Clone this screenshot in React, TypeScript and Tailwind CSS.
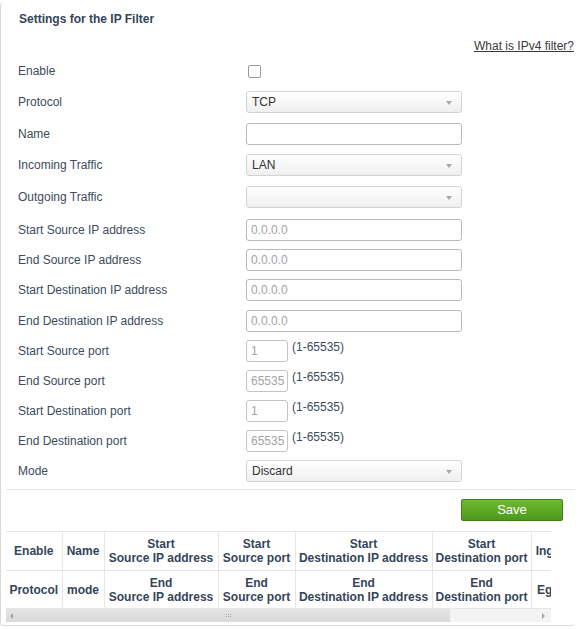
import React from "react";

const SelectBox = ({ value }: { value: string }) => (
  <div className="relative flex h-[22px] w-[216px] items-center rounded-[3px] border border-[#d3d3d3] bg-gradient-to-b from-white to-[#efefef] pl-[5px] text-[#333]">
    <span>{value}</span>
    <span className="absolute right-[9px] top-[9px] h-0 w-0 border-x-[3.5px] border-t-[4px] border-x-transparent border-t-[#a8a8a8]" />
  </div>
);

const TextBox = ({ placeholder }: { placeholder?: string }) => (
  <div className="flex h-[22px] w-[216px] items-center rounded-[3px] border border-[#b9b9b9] bg-white pl-[4px] text-[#a3a3a3]">
    {placeholder}
  </div>
);

const PortBox = ({ value }: { value: string }) => (
  <div className="flex items-start gap-[4px]">
    <div className="flex h-[22px] w-[42px] items-center overflow-hidden rounded-[3px] border border-[#c4c4c4] bg-white pl-[4px] text-[#a3a3a3]">
      {value}
    </div>
    <span className="leading-[14px] text-[#3b4b5b]">(1-65535)</span>
  </div>
);

type Row = { label: string; h: string; control: React.ReactNode };

const rows: Row[] = [
  {
    label: "Enable",
    h: "h-[30px]",
    control: <div className="ml-[2px] h-[13px] w-[13px] rounded-[2px] border border-[#9a9a9a] bg-white" />,
  },
  { label: "Protocol", h: "h-[32px]", control: <SelectBox value="TCP" /> },
  { label: "Name", h: "h-[32px]", control: <TextBox /> },
  { label: "Incoming Traffic", h: "h-[30px]", control: <SelectBox value="LAN" /> },
  { label: "Outgoing Traffic", h: "h-[34px]", control: <SelectBox value="" /> },
  { label: "Start Source IP address", h: "h-[31px]", control: <TextBox placeholder="0.0.0.0" /> },
  { label: "End Source IP address", h: "h-[30px]", control: <TextBox placeholder="0.0.0.0" /> },
  { label: "Start Destination IP address", h: "h-[30px]", control: <TextBox placeholder="0.0.0.0" /> },
  { label: "End Destination IP address", h: "h-[31px]", control: <TextBox placeholder="0.0.0.0" /> },
  { label: "Start Source port", h: "h-[30px]", control: <PortBox value="1" /> },
  { label: "End Source port", h: "h-[30px]", control: <PortBox value="65535" /> },
  { label: "Start Destination port", h: "h-[30px]", control: <PortBox value="1" /> },
  { label: "End Destination port", h: "h-[30px]", control: <PortBox value="65535" /> },
  { label: "Mode", h: "h-[30px]", control: <SelectBox value="Discard" /> },
];

const columns = [
  { w: "w-[56px] min-w-[56px]", top: ["Enable"], bottom: ["Protocol"] },
  { w: "w-[42px] min-w-[42px]", top: ["Name"], bottom: ["mode"] },
  { w: "w-[114px] min-w-[114px]", top: ["Start", "Source IP address"], bottom: ["End", "Source IP address"] },
  { w: "w-[77px] min-w-[77px]", top: ["Start", "Source port"], bottom: ["End", "Source port"] },
  { w: "w-[137px] min-w-[137px]", top: ["Start", "Destination IP address"], bottom: ["End", "Destination IP address"] },
  { w: "w-[99px] min-w-[99px]", top: ["Start", "Destination port"], bottom: ["End", "Destination port"] },
  { w: "w-[52px] min-w-[52px]", top: ["Ingress"], bottom: ["Egress"] },
  { w: "w-[60px] min-w-[60px]", top: ["Action"], bottom: ["Edit"] },
];

export default function App() {
  return (
    <div className="h-[629px] w-[580px] overflow-hidden bg-white font-['Liberation_Sans',Arial,sans-serif] text-[12px] text-[#3b4b5b]">
      <div className="mt-[2px] mr-[5px] h-[624px] rounded-[4px] border-b border-l border-[#dadada]">
        {/* title */}
        <div className="pl-[18px] pt-[10px] font-bold leading-[14px] text-[#34455a]">
          Settings for the IP Filter
        </div>
        <div className="mt-[13px] flex justify-end pr-[1px] leading-[14px]">
          <span className="text-[#3a3a3a] underline">What is IPv4 filter?</span>
        </div>

        {/* form */}
        <div className="mt-[3px] pl-[17px]">
          {rows.map((r) => (
            <div key={r.label} className={`flex items-center ${r.h}`}>
              <div className="w-[228px] shrink-0">{r.label}</div>
              {r.control}
            </div>
          ))}
        </div>

        <div className="ml-[5px] mt-[3px] border-t border-[#e6e6e6]" />

        <div className="mt-[9px] flex justify-end pr-[12px]">
          <button className="flex h-[22px] w-[102px] items-center justify-center rounded-[2px] border border-[#3f8016] bg-gradient-to-b from-[#6fba2f] to-[#4c991e] text-[13px] text-white">
            Save
          </button>
        </div>

        {/* list */}
        <div className="ml-[5px] mt-[10px] w-[545px]">
          <div className="overflow-hidden">
            <table className="table-fixed border-collapse border-t border-[#e6e6e6] font-bold leading-[14px] text-[#34455a]">
              <tbody>
                <tr className="h-[39px]">
                  {columns.map((c, i) => (
                    <td key={i} className={`${c.w} border-r border-b border-[#e6e6e6] px-[2px] text-center whitespace-nowrap`}>
                      {c.top.map((t) => (
                        <div key={t}>{t}</div>
                      ))}
                    </td>
                  ))}
                </tr>
                <tr className="h-[38px]">
                  {columns.map((c, i) => (
                    <td key={i} className={`${c.w} border-r border-b border-[#e6e6e6] px-[2px] text-center whitespace-nowrap`}>
                      {c.bottom.map((t) => (
                        <div key={t}>{t}</div>
                      ))}
                    </td>
                  ))}
                </tr>
              </tbody>
            </table>
          </div>
          {/* scrollbar */}
          <div className="relative flex h-[13px] items-center bg-[#f3f3f3]">
            <div className="flex h-[13px] w-[444px] items-center justify-center bg-gradient-to-b from-[#e4e4e4] to-[#d9d9d9]">
              <div className="grid grid-cols-3 gap-[1px]">
                {Array.from({ length: 6 }).map((_, i) => (
                  <span key={i} className="h-[1px] w-[1px] bg-[#a5a5a5]" />
                ))}
              </div>
            </div>
            <span className="absolute left-[4px] top-[4px] h-0 w-0 border-y-[3px] border-r-[3px] border-y-transparent border-r-[#a3a3a3]" />
            <span className="absolute right-[6px] top-[4px] h-0 w-0 border-y-[3px] border-l-[3px] border-y-transparent border-l-[#a3a3a3]" />
          </div>
        </div>
      </div>
    </div>
  );
}
